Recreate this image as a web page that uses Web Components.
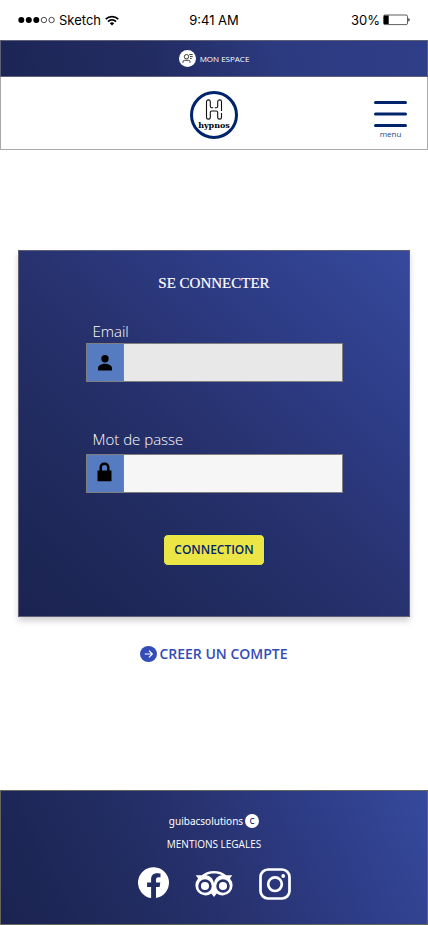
<!DOCTYPE html>
<html lang="fr">
<head>
<meta charset="utf-8">
<meta name="viewport" content="width=device-width, initial-scale=1">
<title>Hypnos - Se connecter</title>
<style>
html { height: 100%; }
body { margin: 0; min-height: 100%; display: flex; flex-direction: column; background: #fff; font-family: "Open Sans", "Noto Sans", sans-serif;
  --shades: #1a2350 0%, #202a5d 25%, #27326f 50%, #2e3d88 75%, #36499c 100%; --navy: #00246b; --royal: #344cb7; }
hypnos-app { flex: 1; }
</style>
</head>
<body>
<hypnos-app></hypnos-app>
<script>
function define(name, html, setup) {
  const template = document.createElement('template');
  template.innerHTML = html;
  customElements.define(name, class extends HTMLElement {
    constructor() {
      super();
      this.attachShadow({ mode: 'open' }).append(template.content.cloneNode(true));
    }
    connectedCallback() { if (setup) setup(this, this.shadowRoot); }
  });
}

define('status-bar', `
<style>
:host { display: grid; grid-template-columns: 1fr auto 1fr; align-items: center; height: 40px; padding: 0 18px; box-sizing: border-box; font: 13px/16px Inter, sans-serif; color: #000; }
div { display: flex; align-items: center; gap: 4px; }
.end { justify-content: flex-end; gap: 3px; }
svg { display: block; }
</style>
<div>
  <svg width="37" height="8" viewBox="0 0 37 8"><g><circle cx="3.3" cy="4" r="3"/><circle cx="10.8" cy="4" r="3"/><circle cx="18.3" cy="4" r="3"/></g><g fill="none" stroke="#000" stroke-width=".7"><circle cx="25.9" cy="4" r="2.7"/><circle cx="33.6" cy="4" r="2.7"/></g></svg>
  <span>Sketch</span>
  <svg width="14" height="11" viewBox="0 0 14 11" fill="none" stroke="#000" stroke-width="1.7"><path d="M.7 4.2a9 9 0 0 1 12.6 0M3 6.6a5.7 5.7 0 0 1 8 0"/><path d="M7 10.4 4.8 8.3a3.1 3.1 0 0 1 4.4 0z" fill="#000" stroke="none"/></svg>
</div>
<span>9:41 AM</span>
<div class="end">
  <span>30%</span>
  <svg width="27" height="12" viewBox="0 0 27 12"><rect x=".5" y="1" width="24" height="9.6" rx="1.5" fill="none" stroke="#333" stroke-width=".8"/><path d="M1 1.6h4.7v8.4H1zM25.4 4c1.6.5 1.6 3.100 0 3.600z"/></svg>
</div>`);

define('account-bar', `
<style>
:host { display: flex; justify-content: center; align-items: center; height: 37px; box-sizing: border-box; border: 1px solid #5e6078; background: linear-gradient(80deg, #1c2655, #222c62 35%, #2c3a80 65%, #2f3e88); }
a { display: flex; align-items: center; gap: 4px; color: #fff; text-decoration: none; font-size: 8px; line-height: 16px; }
svg { display: block; }
</style>
<a href="#espace">
  <svg width="17" height="17" viewBox="0 0 17 17"><circle cx="8.500" cy="8.500" r="8.500" fill="#fff"/><g fill="none" stroke="#222" stroke-width=".9"><circle cx="7.500" cy="6.700" r="2.200"/><path d="M4 12.800v-1q0-1.500 1.500-1.500h4q1.500 0 1.500 1.500v1M10.200 4.600h3.500M11 6.600h2.700M11 8.500h1.600"/></g></svg>
  <slot></slot>
</a>`);

define('hypnos-logo', `
<style>
:host { display: block; }
a { display: flex; flex-direction: column; align-items: center; width: 48px; height: 48px; box-sizing: border-box; border: 3px solid var(--navy); border-radius: 50%; padding-top: 5px; color: #000; text-decoration: none; font: bold 8px/10px "DejaVu Serif", serif; }
svg { display: block; }
</style>
<a href="#accueil">
  <svg width="18" height="21" viewBox="0 0 18 21" fill="none" stroke="#111" stroke-width="1.100"><path d="M1.500 2.700c0-2.400 3.800-2.400 3.800 0v4.600c0 1 .5 1.500 1.500 1.500h1.400M9.800 8.800h1.400c1 0 1.500-.5 1.500-1.500V2.700c0-2.400 3.800-2.400 3.800 0V12M1.500 2.700v15.800c0 2.200 3.800 2.200 3.800 0v-5c0-1 .5-1.500 1.500-1.500h4.400c1 0 1.500.5 1.500 1.500v5c0 2.200 3.800 2.200 3.800 0V14"/></svg>
  <slot></slot>
</a>`);

define('menu-button', `
<style>
:host { display: block; justify-self: end; }
button { display: flex; flex-direction: column; align-items: center; padding: 0; border: 0; background: none; color: #27478c; font: 8px/10px "Open Sans", sans-serif; cursor: pointer; }
svg { display: block; }
</style>
<button type="button"><svg width="33" height="29" viewBox="0 0 33 29" stroke="#00246b" stroke-width="3" stroke-linecap="round"><path d="M1.500 2.500h30M1.500 14h30M1.500 25.500h30"/></svg><slot></slot></button>`);

define('site-header', `
<style>
:host { display: grid; grid-template-columns: 1fr auto 1fr; align-items: center; height: 73px; box-sizing: border-box; padding: 3px 20px 0; border: 1px solid #aaa; border-top: 0; }
menu-button { grid-column: 3; padding-top: 10px; }
hypnos-logo { grid-column: 2; }
</style>
<hypnos-logo>hypnos</hypnos-logo>
<menu-button>menu</menu-button>`);

define('icon-field', `
<style>
:host { display: flex; flex-direction: column; gap: var(--gap, 0); }
label { padding-left: 7px; color: #fff; font-weight: 300; font-size: 15px; line-height: 24px; }
div { display: flex; height: 39px; box-sizing: border-box; border: 1px solid #807f80; }
span { display: flex; justify-content: center; align-items: center; flex: 0 0 37px; box-sizing: border-box; border-right: 1px solid #807f80; background: #577bc1; }
input { flex: 1; min-width: 0; padding: 0 8px; border: 0; border-radius: 0; background: var(--fill, #f6f6f6); font: 15px/24px "Open Sans", sans-serif; }
</style>
<label for="control"></label>
<div><span><slot></slot></span><input id="control"></div>`, (host, root) => {
  root.querySelector('label').textContent = host.getAttribute('label');
  const input = root.querySelector('input');
  input.type = host.getAttribute('type');
  input.autocomplete = host.getAttribute('autocomplete');
});

define('login-card', `
<style>
:host { display: block; padding: 20px 0 50px; border: 1px solid #5e6078; background: linear-gradient(to top right, var(--shades)); box-shadow: 0 4px 6px rgba(0,0,0,.18); }
form { display: flex; flex-direction: column; align-items: center; margin: 0; }
h1 { margin: 0 0 24px; color: #fff; font: 15px/24px "Liberation Serif", serif; -webkit-text-stroke: .2px #fff; }
icon-field { width: calc(100% - 133px); max-width: 480px; }
.mail { --fill: #e8e8e8; margin-bottom: 45px; }
.pass { --gap: 3px; }
button { margin-top: 41px; padding: 0 10px; height: 32px; border: 1px solid #0f2d68; border-radius: 5px; background: #ebe545; color: #00246b; font: 600 12px/16px "Open Sans", sans-serif; cursor: pointer; }
svg { display: block; }
</style>
<form>
  <h1>SE CONNECTER</h1>
  <icon-field class="mail" label="Email" type="email" autocomplete="email">
    <svg width="14" height="16" viewBox="0 0 14 16"><circle cx="7" cy="3.800" r="3.700"/><path d="M0 15.500v-2.300C0 10.500 3.700 8.800 7 8.800s7 1.700 7 4.400v2.300z"/></svg>
  </icon-field>
  <icon-field class="pass" label="Mot de passe" type="password" autocomplete="current-password">
    <svg width="15" height="24" viewBox="0 0 15 24"><path fill-rule="evenodd" d="M.5 8.500h2V5.800C2.500 2.500 4.500.5 7.500.5s5 2 5 5.300v2.700h2v10.800H.5zM5 8.500h5V5.500C10 4 9.100 3 7.500 3S5 4 5 5.500z"/></svg>
  </icon-field>
  <button type="submit">CONNECTION</button>
</form>`);

define('signup-link', `
<style>
:host { display: block; }
a { display: flex; align-items: center; gap: 2px; color: var(--royal); text-decoration: none; font-weight: 600; font-size: 14px; line-height: 20px; }
svg { display: block; }
</style>
<a href="#inscription"><svg width="17" height="16" viewBox="0 0 17 16"><ellipse cx="8.500" cy="8" rx="8.500" ry="8" fill="#344cb7"/><path d="M4.700 8h7.600M9 4.700 12.300 8 9 11.300" fill="none" stroke="#fff" stroke-width="1.200"/></svg><slot></slot></a>`);

define('site-footer', `
<style>
:host { display: flex; flex-direction: column; align-items: center; min-height: 135px; box-sizing: border-box; padding: 20px 0; border: 1px solid #65665f; background: linear-gradient(65deg, var(--shades)); color: #fff; font-size: 10px; line-height: 20px; }
a { color: #fff; text-decoration: none; }
.credit { display: flex; align-items: center; gap: 2px; font-family: "Noto Sans", sans-serif; }
.mark { display: grid; place-items: center; width: 14px; height: 14px; border-radius: 50%; background: #fff; color: #26306a; font: 600 8px/14px "Open Sans", sans-serif; }
.legal { margin: 3px 0; }
nav { display: flex; align-items: center; gap: 26px; margin-top: 10px; }
svg { display: block; }
</style>
<div class="credit"><span>guibacsolutions</span><span class="mark">C</span></div>
<a class="legal" href="#mentions">MENTIONS LEGALES</a>
<nav aria-label="Réseaux sociaux">
  <a href="#facebook" aria-label="Facebook"><svg width="31" height="33" viewBox="0 0 31 33" fill="#fff"><path d="M31 15.600A15.500 15.500 0 1 0 13.100 31V20.100H9.100v-4.500h4v-3.400c0-3.900 2.300-6 5.900-6 1.700 0 3.500.3 3.500.3v3.800h-2c-1.900 0-2.500 1.200-2.500 2.400v2.900h4.300l-.7 4.500H18V31A15.500 15.500 0 0 0 31 15.600z"/></svg></a>
  <a href="#tripadvisor" aria-label="Tripadvisor"><svg width="38" height="28" viewBox="0 0 38 28"><path fill="#fff" d="M.7 5.200h6C10 2.500 14.200 1 19 1s9 1.500 12.300 4.200h6L34.900 8.600a10 10 0 0 1-13.200 14.900L19 26.900l-2.700-3.400A10 10 0 0 1 3.100 8.600z"/><path fill="#27326f" d="M11 5.200C13.200 4.100 15.900 3.600 19 3.600s5.800.5 8 1.600c-4.300.5-7.400 3.700-8 8.200-.6-4.500-3.700-7.700-8-8.200z"/><g fill="none" stroke="#27326f" stroke-width="2.700"><circle cx="10" cy="16" r="5.400"/><circle cx="28" cy="16" r="5.400"/></g></svg></a>
  <a href="#instagram" aria-label="Instagram"><svg width="32" height="32" viewBox="0 0 32 32" fill="none" stroke="#fff" stroke-width="2.700"><rect x="1.500" y="1.500" width="29" height="29" rx="7.500"/><circle cx="16" cy="16.200" r="6.800"/><circle cx="24.200" cy="8" r="1.900" fill="#fff" stroke="none"/></svg></a>
</nav>`);

define('hypnos-app', `
<style>
:host { display: flex; flex-direction: column; }
main { flex: 1; display: flex; flex-direction: column; padding: 100px 18px 40px; }
signup-link { align-self: center; margin-top: 27px; }
</style>
<status-bar></status-bar>
<account-bar>MON ESPACE</account-bar>
<site-header></site-header>
<main>
  <login-card></login-card>
  <signup-link>CREER UN COMPTE</signup-link>
</main>
<site-footer></site-footer>`);
</script>
</body>
</html>
